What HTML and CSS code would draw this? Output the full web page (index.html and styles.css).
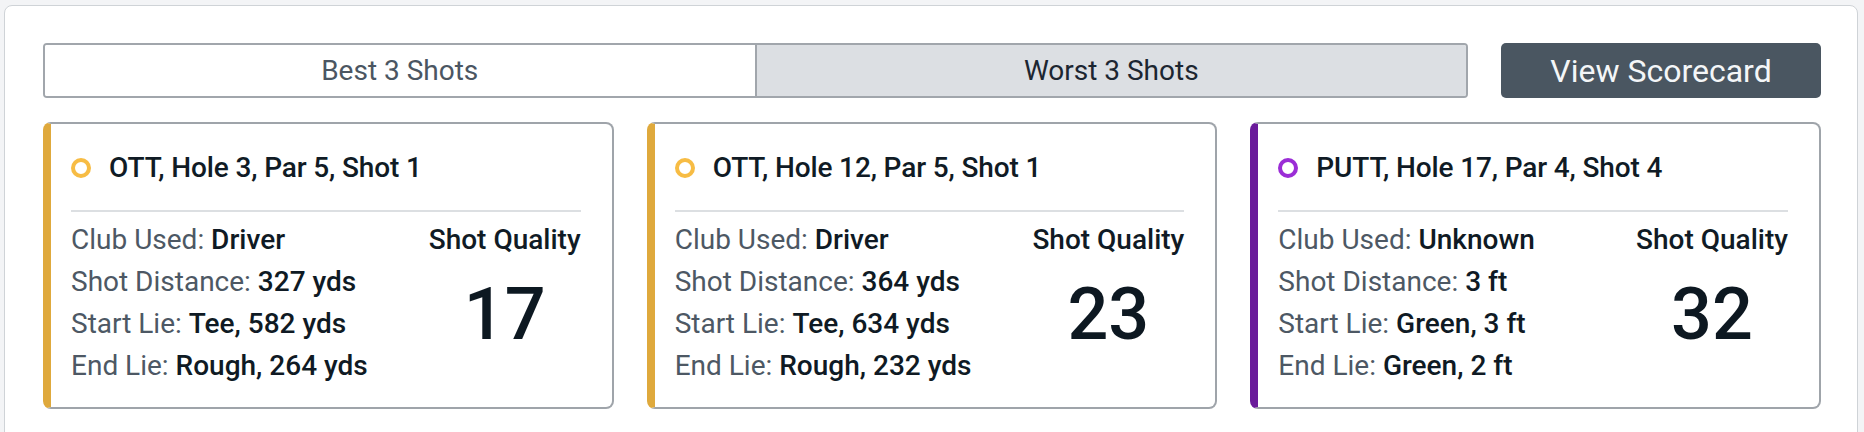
FILE: index.html
```
<!DOCTYPE html>
<html lang="en">
<head>
<meta charset="utf-8">
<title>Shots</title>
<link rel="stylesheet" href="styles.css">
</head>
<body>
<div class="panel">
  <div class="toolbar">
    <div class="tabs">
      <div class="tab">Best 3 Shots</div>
      <div class="tab active">Worst 3 Shots</div>
    </div>
    <div class="btn">View Scorecard</div>
  </div>
  <div class="cards">
    <div class="card gold">
      <div class="title"><span class="dot"></span>OTT, Hole 3, Par 5, Shot 1</div>
      <div class="rule"></div>
      <div class="body">
        <div class="details">
          <div>Club Used: <b>Driver</b></div>
          <div>Shot Distance: <b>327 yds</b></div>
          <div>Start Lie: <b>Tee, 582 yds</b></div>
          <div>End Lie: <b>Rough, 264 yds</b></div>
        </div>
        <div class="quality">
          <div class="q-label">Shot Quality</div>
          <div class="q-value">17</div>
        </div>
      </div>
    </div>
    <div class="card gold">
      <div class="title"><span class="dot"></span>OTT, Hole 12, Par 5, Shot 1</div>
      <div class="rule"></div>
      <div class="body">
        <div class="details">
          <div>Club Used: <b>Driver</b></div>
          <div>Shot Distance: <b>364 yds</b></div>
          <div>Start Lie: <b>Tee, 634 yds</b></div>
          <div>End Lie: <b>Rough, 232 yds</b></div>
        </div>
        <div class="quality">
          <div class="q-label">Shot Quality</div>
          <div class="q-value">23</div>
        </div>
      </div>
    </div>
    <div class="card purple">
      <div class="title"><span class="dot"></span>PUTT, Hole 17, Par 4, Shot 4</div>
      <div class="rule"></div>
      <div class="body">
        <div class="details">
          <div>Club Used: <b>Unknown</b></div>
          <div>Shot Distance: <b>3 ft</b></div>
          <div>Start Lie: <b>Green, 3 ft</b></div>
          <div>End Lie: <b>Green, 2 ft</b></div>
        </div>
        <div class="quality">
          <div class="q-label">Shot Quality</div>
          <div class="q-value">32</div>
        </div>
      </div>
    </div>
  </div>
</div>
</body>
</html>
```
FILE: styles.css
```
* { box-sizing: border-box; }
html, body { margin: 0; height: 432px; overflow: hidden; }
body {
  background: #f3f4f6;
  padding: 5px 6px 0 4px;
  font-family: Roboto, "Liberation Sans", sans-serif;
}
.panel {
  background: #fff;
  border: 1px solid #cfd3d7;
  border-radius: 8px;
  padding: 37px 36px 60px 38px;
}
.toolbar {
  display: flex;
  gap: 33px;
  height: 55px;
}
.tabs {
  flex: 1;
  display: flex;
  border: 2px solid #a1a6ac;
  border-radius: 4px;
  overflow: hidden;
}
.tab {
  flex: 1;
  display: flex;
  align-items: center;
  justify-content: center;
  font-size: 28px;
  color: #4b5662;
  background: #fff;
}
.tab.active {
  background: #dcdfe3;
  color: #1c2631;
  border-left: 2px solid #a1a6ac;
}
.btn {
  width: 320px;
  display: flex;
  align-items: center;
  justify-content: center;
  background: #4a5661;
  color: #f4f6f8;
  font-size: 32px;
  border-radius: 5px;
}
.cards {
  display: grid;
  grid-template-columns: repeat(3, 1fr);
  gap: 33px;
  margin-top: 24px;
}
.card {
  border: 2px solid #9fa4aa;
  border-left: 8px solid #dfa93c;
  border-radius: 8px;
  padding: 23px 31px 20px 20px;
}
.card.purple { border-left-color: #6a1b9a; }
.title {
  display: flex;
  align-items: center;
  gap: 18px;
  font-size: 28px;
  line-height: 42px;
  font-weight: 500;
  letter-spacing: -0.14px;
  color: #101b25;
}
.dot {
  width: 20px;
  height: 20px;
  border-radius: 50%;
  border: 4px solid #f7bc44;
  flex: none;
}
.purple .dot { border-color: #9b2dd6; }
.rule {
  height: 2px;
  background: #dcdfe2;
  margin: 21px 0 7px;
}
.body {
  display: flex;
  justify-content: space-between;
}
.details {
  font-size: 28px;
  line-height: 42px;
  color: #4d5864;
}
.details b {
  font-weight: 500;
  color: #0f1a24;
}
.quality {
  text-align: center;
}
.q-label {
  font-size: 28px;
  line-height: 42px;
  font-weight: 500;
  color: #101b25;
}
.q-value {
  margin-top: 18px;
  font-size: 72px;
  line-height: 72px;
  font-weight: 500;
  color: #0d1821;
}
```
